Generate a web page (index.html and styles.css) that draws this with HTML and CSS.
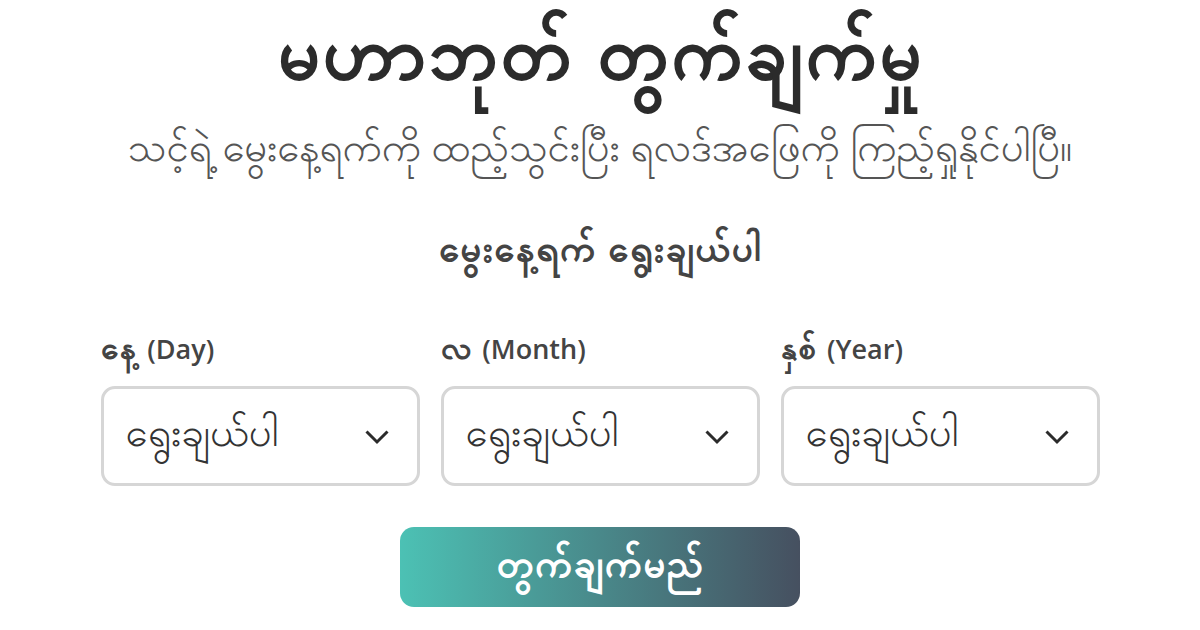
FILE: index.html
```html
<!DOCTYPE html>
<html lang="my">
<head>
  <meta charset="UTF-8" />
  <meta name="viewport" content="width=device-width, initial-scale=1.0"/>
  <title>မဟာဘုတ် တွက်ချက်မှု</title>
  <link rel="stylesheet" href="styles.css">
</head>
<body>

<div class="container">
  <h1>မဟာဘုတ် တွက်ချက်မှု</h1>
  <p class="subtitle">သင့်ရဲ့ မွေးနေ့ရက်ကို ထည့်သွင်းပြီး ရလဒ်အဖြေကို ကြည့်ရှုနိုင်ပါပြီ။</p>

  <h2>မွေးနေ့ရက် ရွေးချယ်ပါ</h2>

  <div class="date-group">
    <div class="date-item">
      <label for="day">နေ့ <span class="en">(Day)</span></label>
      <div class="select-box">
        <select id="day" name="day">
          <option>ရွေးချယ်ပါ</option>
        </select>
        <svg class="chevron" viewBox="0 0 24 24"><path d="M5 9l7 7 7-7"/></svg>
      </div>
    </div>
    <div class="date-item">
      <label for="month">လ <span class="en">(Month)</span></label>
      <div class="select-box">
        <select id="month" name="month">
          <option>ရွေးချယ်ပါ</option>
        </select>
        <svg class="chevron" viewBox="0 0 24 24"><path d="M5 9l7 7 7-7"/></svg>
      </div>
    </div>
    <div class="date-item">
      <label for="year">နှစ် <span class="en">(Year)</span></label>
      <div class="select-box">
        <select id="year" name="year">
          <option>ရွေးချယ်ပါ</option>
        </select>
        <svg class="chevron" viewBox="0 0 24 24"><path d="M5 9l7 7 7-7"/></svg>
      </div>
    </div>
  </div>

  <div class="actions">
    <button type="button" class="calc-btn">တွက်ချက်မည်</button>
  </div>
</div>

</body>
</html>
```

FILE: styles.css
```css
body {
  font-family: "Padauk", "Open Sans", sans-serif;
  background: #ffffff;
  margin: 0;
  padding: 0;
  color: #333333;
}

.container {
  width: 999px;
  margin: 0 auto;
  text-align: center;
}

/* Padauk's space is wide, pull words closer like the design */
h1, h2, .date-item label {
  word-spacing: -0.2em;
}

h1 {
  font-size: 77px;
  font-weight: bold;
  color: #2b2b2b;
  margin: 0;
  line-height: 120px;
}

.subtitle {
  font-size: 40px;
  color: #555555;
  margin: 0;
  line-height: 64px;
  word-spacing: -0.1em;
}

h2 {
  font-size: 38px;
  font-weight: bold;
  color: #444444;
  margin: 40px 0 0;
  line-height: 56px;
}

.date-group {
  display: grid;
  grid-template-columns: repeat(3, 1fr);
  gap: 21px;
  margin-top: 47px;
  text-align: left;
}

.date-item {
  display: flex;
  flex-direction: column;
}

.date-item label {
  font-size: 33px;
  font-weight: bold;
  color: #444444;
  line-height: 44px;
  margin-bottom: 13px;
}

.en {
  font-family: "Open Sans", sans-serif;
  font-size: 27px;
  font-weight: 600;
  word-spacing: normal;
}

.select-box {
  position: relative;
}

.select-box select {
  width: 100%;
  height: 100px;
  appearance: none;
  -webkit-appearance: none;
  background: #ffffff;
  border: 3px solid #d6d6d6;
  border-radius: 14px;
  padding: 0 22px;
  font-family: inherit;
  font-size: 40px;
  color: #333333;
}

.chevron {
  position: absolute;
  right: 25px;
  top: 50%;
  width: 36px;
  height: 36px;
  margin-top: -18px;
  fill: none;
  stroke: #2b2b2b;
  stroke-width: 2;
  pointer-events: none;
}

.actions {
  display: flex;
  justify-content: center;
  margin-top: 41px;
}

.calc-btn {
  width: 400px;
  height: 80px;
  border: none;
  border-radius: 14px;
  background: linear-gradient(90deg, #4cc1b4, #465060);
  color: #ffffff;
  font-family: inherit;
  font-size: 40px;
  font-weight: bold;
  cursor: pointer;
}
```
